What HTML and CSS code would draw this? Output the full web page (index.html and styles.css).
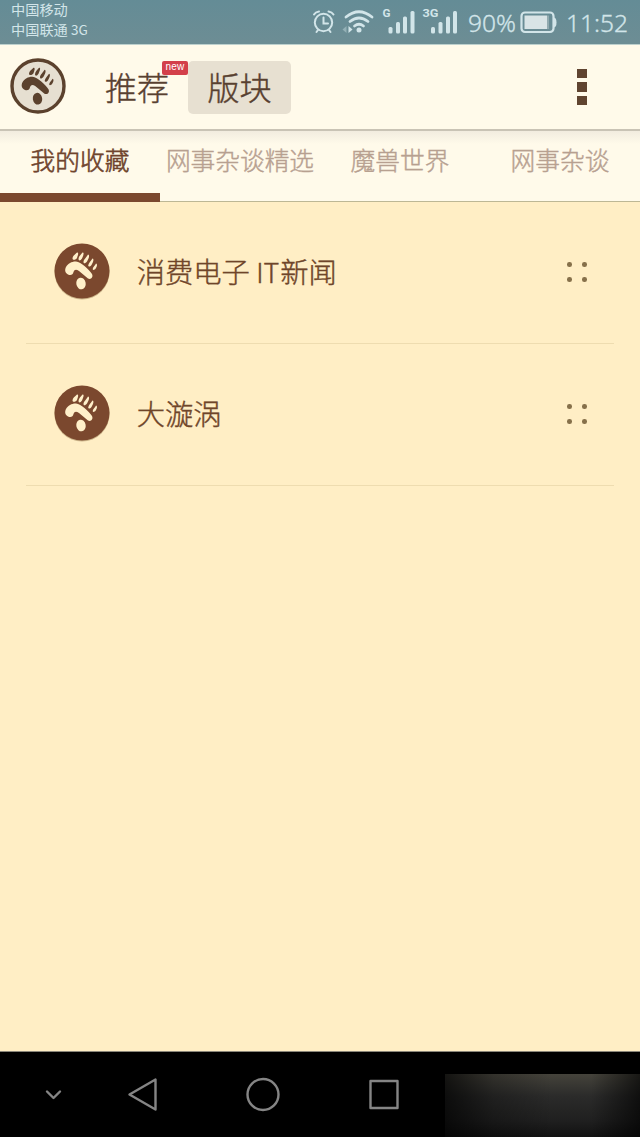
FILE: index.html
```html
<!DOCTYPE html>
<html lang="zh-CN">
<head>
<meta charset="utf-8">
<title>版块</title>
<link rel="stylesheet" href="styles.css">
</head>
<body>
<svg width="0" height="0" class="defs">
  <symbol id="foot" viewBox="0 0 56 56">
    <path d="M14 31.5C11 30 10.5 27 12 24C14 20.5 18 18.3 22 18.5C27 19 35 26.500 38 31C39.500 34 37 37 34 35.500L25 28C22 26 20.500 26.500 19.500 29C19 31.500 17 33 14 31.500Z"/>
    <ellipse cx="27" cy="40.500" rx="4.700" ry="5.900" transform="rotate(-10 27 40.500)"/>
    <path d="M18.500 15.500C18.500 13 21 11.500 23 9.500C25 9.500 24 12 23 15C22 17 18.500 17.500 18.500 15.500Z"/>
    <path d="M24.500 16C24.500 13.500 27 11.500 28.500 9.500C30.500 9.500 29.500 12 28 15.500C26.500 18 24.500 18 24.500 16Z"/>
    <path d="M29.500 19C29.500 16.500 32.500 14.500 34 11.500C36 12 35 15 33 18.500C31.500 20.500 29.500 21 29.500 19Z"/>
    <path d="M34.200 22.500C34.500 20 37 18 38.500 15.500C40.500 16 39 19.500 37.500 22C36 24 34.200 24 34.200 22.500Z"/>
    <path d="M38.700 26C39 24 41 22.500 42 20.500C43.700 21 43 23.500 41.700 25.500C40.500 27.200 38.700 27.500 38.700 26Z"/>
  </symbol>
</svg>
<div class="screen">
  <div class="status">
    <div class="carriers"><span>中国移动</span><span>中国联通 <i>3G</i></span></div>
    <svg class="signals" width="150" height="44" viewBox="310 0 150 44">
      <g fill="none" stroke="#d2e5e9" stroke-width="2" stroke-linecap="round">
        <circle cx="323.500" cy="22.500" r="8.700"/>
        <path d="M323.500 17.500V23.500H328M314 14.500Q315.500 12 319 11.500M328.500 11.500Q332 12 333.500 14.500M318 30L316.500 32M329 30L330.500 32"/>
        <path stroke-width="2.800" d="M346 17Q359 6.500 372 17M350 21.500Q359 14.500 368 21.500M354.500 26Q359 22.500 363.500 26"/>
      </g>
      <g fill="#d2e5e9">
        <circle cx="359" cy="30" r="2.500"/>
        <path d="M348.500 26V33L352.500 29.500Z"/><path opacity=".4" d="M346.500 26V33L342.500 29.500Z"/>
        <rect x="388.500" y="27" width="4" height="6.500" rx="1.500"/><rect x="396" y="22" width="4" height="11.500" rx="1.500"/><rect x="403" y="16.500" width="4" height="17" rx="1.500"/><rect x="410.500" y="11" width="4" height="22.500" rx="1.500"/>
        <rect x="431" y="27" width="4" height="6.500" rx="1.500"/><rect x="438.500" y="22" width="4" height="11.500" rx="1.500"/><rect x="446" y="16.500" width="4" height="17" rx="1.500"/><rect x="453" y="11" width="4" height="22.500" rx="1.500"/>
      </g>
      <text class="net" x="382.500" y="17" textLength="8" lengthAdjust="spacingAndGlyphs">G</text><text class="net" x="422.500" y="17" textLength="16" lengthAdjust="spacingAndGlyphs">3G</text>
    </svg>
    <svg class="power" width="180" height="44" viewBox="460 0 180 44">
      <text class="big" x="468" y="32" textLength="48" lengthAdjust="spacingAndGlyphs">90%</text>
      <rect x="521.500" y="12.500" width="32" height="19.500" rx="3.500" fill="none" stroke="#d2e5e9" stroke-width="2.200"/>
      <rect x="524.500" y="15.500" width="22.500" height="13.500" fill="#d9e4e6"/><rect x="547" y="15.500" width="2" height="13.500" fill="#91aaaf"/>
      <path d="M554 17.500Q556.500 18 556.500 22.500Q556.500 27 554 27.500Z" fill="#d2e5e9"/>
      <text class="big" x="566" y="32" textLength="62" lengthAdjust="spacingAndGlyphs">11:52</text>
    </svg>
  </div>
  <header class="header">
    <svg class="logo" width="56" height="56" viewBox="0 0 56 56"><circle cx="28" cy="28" r="26" fill="#e6dfd1" stroke="#5b412d" stroke-width="3.400"/><use href="#foot" fill="#5b412d" transform="translate(.5 .2)"/></svg>
    <div class="mode">推荐<b class="new">new</b></div>
    <div class="mode chosen">版块</div>
    <div class="more"><i></i><i></i><i></i></div>
  </header>
  <nav class="tabs">
    <div class="tab active"><span>我的收藏</span></div>
    <div class="tab"><span>网事杂谈精选</span></div>
    <div class="tab"><span>魔兽世界</span></div>
    <div class="tab"><span>网事杂谈</span></div>
  </nav>
  <main class="list">
    <div class="row">
      <svg class="avatar" width="56" height="58" viewBox="0 0 56 58"><circle class="shade" cx="28" cy="29" r="27.600"/><circle cx="28" cy="28" r="27.500" fill="#7b482e"/><use href="#foot" width="56" height="56" fill="#fff0ca"/></svg>
      <span class="name">消费电子 <em>IT</em>新闻</span>
      <div class="grip"><i></i><i></i><i></i><i></i></div>
    </div>
    <div class="row">
      <svg class="avatar" width="56" height="58" viewBox="0 0 56 58"><circle class="shade" cx="28" cy="29" r="27.600"/><circle cx="28" cy="28" r="27.500" fill="#7b482e"/><use href="#foot" width="56" height="56" fill="#fff0ca"/></svg>
      <span class="name">大漩涡</span>
      <div class="grip"><i></i><i></i><i></i><i></i></div>
    </div>
  </main>
  <footer class="navbar">
    <svg width="445" height="85" viewBox="0 1052 445 85" fill="none" stroke="#858585" stroke-width="2.400" stroke-linejoin="round" stroke-linecap="round">
      <path d="M47 1091.500L53.500 1098L60 1091.500"/>
      <path d="M129.500 1094.500L155.500 1079.500V1109.500Z"/>
      <circle cx="263" cy="1094.500" r="15.500"/>
      <rect x="370.500" y="1081" width="27" height="27"/>
    </svg>
    <div class="glow"></div>
  </footer>
</div>
</body>
</html>
```
FILE: styles.css
```css
* { box-sizing: border-box; }
body { margin: 0; background: #ffeec5; font-family: "Noto Sans CJK SC", sans-serif; font-weight: 300; }
i, em { font-style: normal; }
.defs { position: absolute; }
.screen { width: 640px; height: 1137px; display: flex; flex-direction: column; overflow: hidden; }

.status { height: 44px; flex: none; display: flex; background: linear-gradient(#648c96, #6d8d94); color: #d2e5e9; }
.carriers { width: 310px; padding-left: 11px; display: flex; flex-direction: column; font-size: 14.2px; line-height: 20px; margin-top: -1px; font-weight: 400; white-space: nowrap; }
.carriers i { font-size: 13.500px; }
.net { font: bold 11.500px Roboto, sans-serif; fill: #d2e5e9; }
.big { font: 300 24px "Noto Sans", "Open Sans", sans-serif; fill: #d2e5e9; stroke: #d2e5e9; stroke-width: .3px; }

.header { height: 87px; flex: none; display: flex; align-items: center; padding: 0 53px 0 10px; background: #fffaea; border-top: 1px solid #bdd0cd; border-bottom: 2px solid #c9c3b5; color: #584030; -webkit-text-stroke: .4px; }
.logo { margin-top: -3px; }
.mode { position: relative; height: 53px; margin-left: 39px; font-size: 32px; line-height: 50px; white-space: nowrap; }
.chosen { width: 103px; margin-left: 19px; border-radius: 5px; background: #e7e0d1; text-align: center; }
.new { position: absolute; left: 57px; top: 0; width: 26px; height: 14px; border-radius: 2px; background: #d3404a; color: #fff; font: 10px/12px "Liberation Sans", sans-serif; text-align: center; letter-spacing: .3px; -webkit-text-stroke: 0; }
.more { width: 10px; margin-left: auto; display: flex; flex-direction: column; gap: 4px; }
.more i { height: 9.500px; background: #604430; }

.tabs { height: 71px; flex: none; display: grid; grid-template-columns: repeat(4, 160px); background: linear-gradient(#f2ecdf, #fffaea 13px); border-bottom: 1px solid #bdb795; }
.tab { display: flex; justify-content: center; height: 71px; padding-top: 10px; font-size: 24.700px; line-height: 36px; color: #b7a090; white-space: nowrap; -webkit-text-stroke: .4px; }
.active { color: #6f442d; border-bottom: 9px solid #7b482e; -webkit-text-stroke: .6px; }

.list { flex: 1; padding: 0 26px; background: #ffeec5; }
.row { height: 142px; display: flex; align-items: flex-start; padding: 40.500px 27px 0 27.700px; border-bottom: 1px solid #eedcb0; color: #6f4529; -webkit-text-stroke: .4px; }
.shade { fill: #cdb68b; }
.avatar { display: block; }
.name { margin-left: 27px; font-size: 28.300px; line-height: 55px; white-space: nowrap; }
.name em { margin-right: 1px; font-size: 27px; }
.grip { margin: 19.500px 0 0 auto; display: grid; grid-template-columns: 4.600px 4.600px; gap: 10.600px; }
.grip i { width: 4.600px; height: 4.600px; border-radius: 50%; background: #86704a; }

.navbar { height: 86px; flex: none; display: flex; align-items: flex-end; background: #000; border-top: 1px solid #8b877a; }
.glow { width: 195px; height: 63px; background: linear-gradient(90deg, rgba(0,0,0,.7), rgba(0,0,0,.25) 25%, transparent 55%, transparent 75%, rgba(0,0,0,.65)), linear-gradient(#45433b, #2b2b2a 35%, #1f1f1f 75%, #111); }
```
